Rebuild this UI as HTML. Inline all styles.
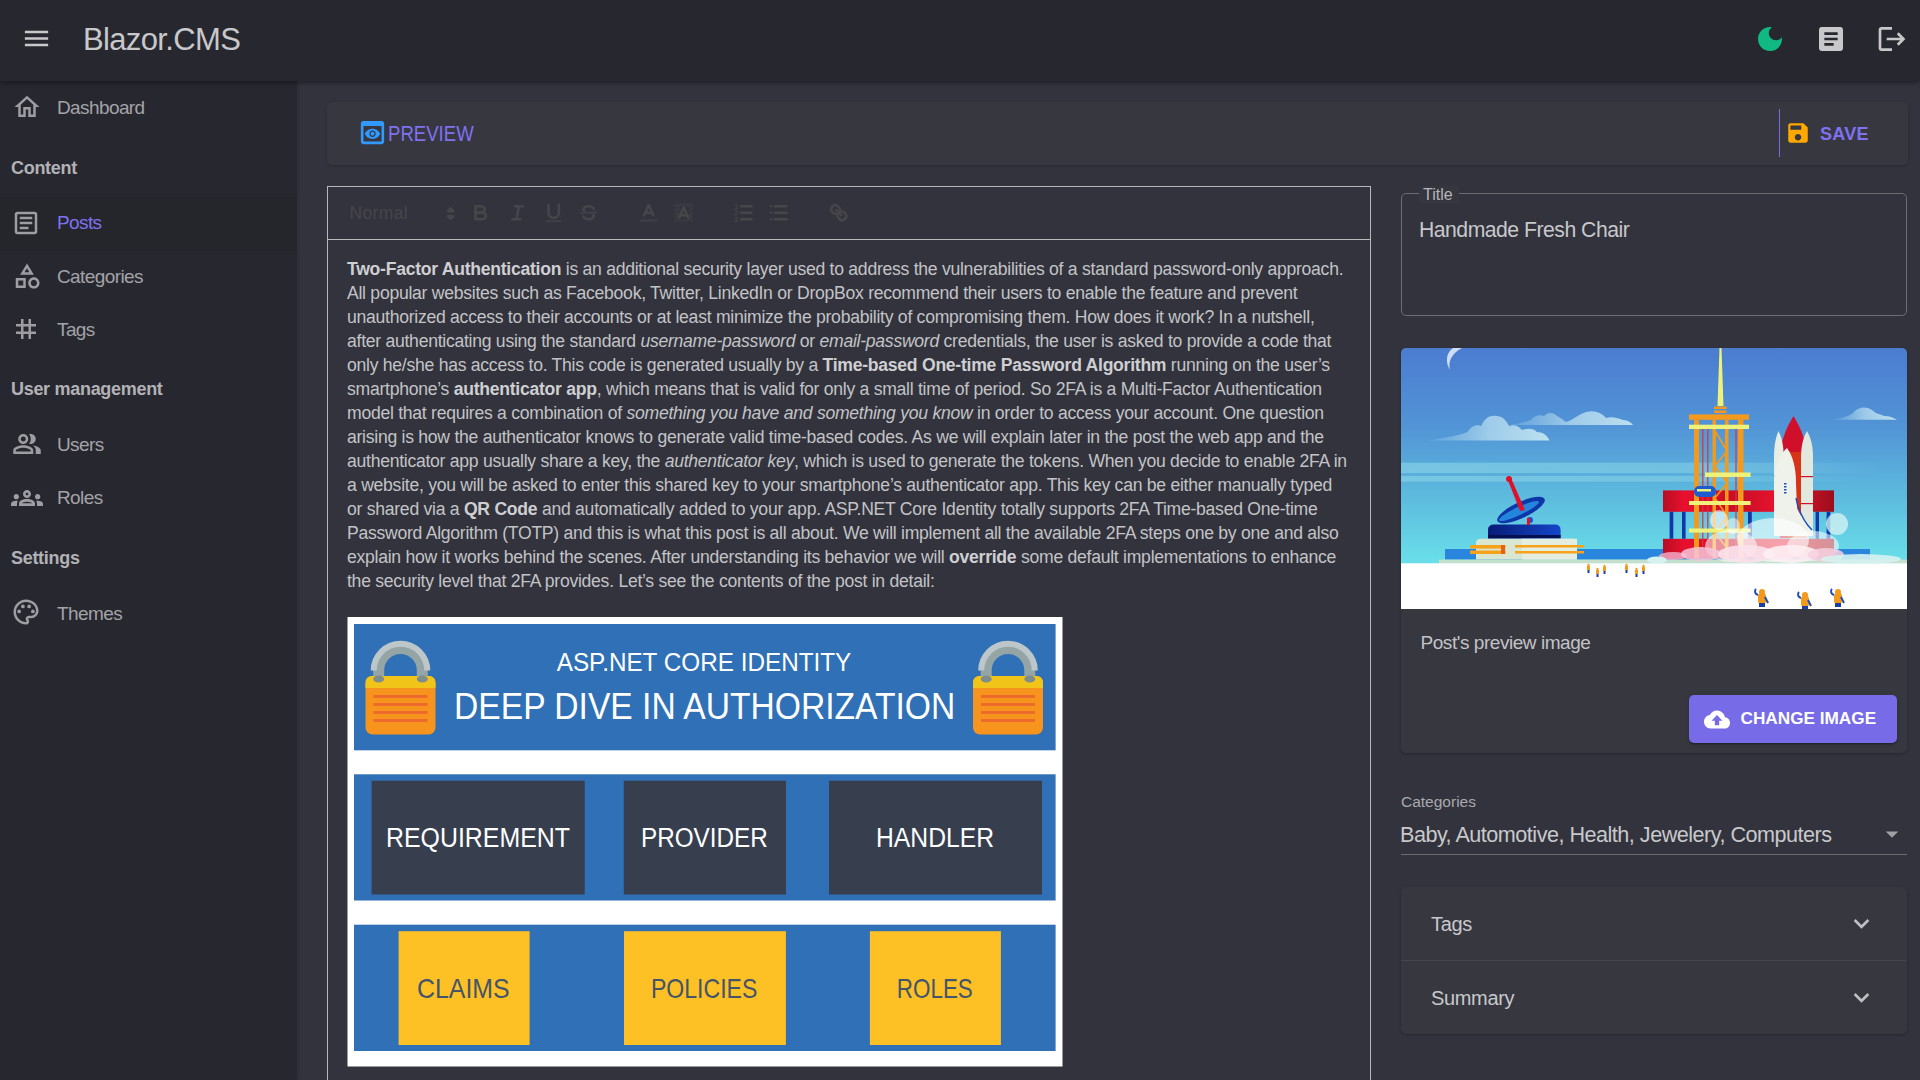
<!DOCTYPE html>
<html><head><meta charset="utf-8">
<style>
*{box-sizing:border-box;margin:0;padding:0}
html,body{width:1920px;height:1080px;overflow:hidden;background:#32333d;font-family:"Liberation Sans",sans-serif}
.abs{position:absolute}
svg{display:block}
#appbar{position:absolute;left:0;top:0;width:1920px;height:81px;background:#27272f;box-shadow:0 2px 4px rgba(0,0,0,.35);z-index:3}
#drawer{position:absolute;left:0;top:81px;width:297px;height:999px;background:#27272f;z-index:2;box-shadow:1px 0 3px rgba(0,0,0,.15)}
.t{position:absolute;white-space:pre;line-height:1}
.nav-ico{position:absolute;fill:#9d9da3}
.nav-txt{position:absolute;white-space:pre;line-height:1;font-size:19px;color:#a3a3a8;letter-spacing:-0.6px;margin-top:1px}
.grp{position:absolute;white-space:pre;line-height:1;font-size:18px;font-weight:700;color:#b2b2b6;letter-spacing:-0.3px}
#editor{position:absolute;left:327px;top:186px;width:1044px;height:900px;border:1px solid #cccccc}
#tb{position:absolute;left:0;top:0;width:1042px;height:54px;border-bottom:1px solid #cccccc}
.para{position:absolute;left:347px;top:256.5px;width:1010px;font-size:17.6px;letter-spacing:-0.27px;line-height:24.02px;color:#c3c3c6;white-space:nowrap}
.para b{font-weight:700;color:#cfcfd2}
</style></head><body>

<!-- APP BAR -->
<div id="appbar">
  <svg class="abs" style="left:21px;top:23px" width="31" height="31" viewBox="0 0 24 24"><path fill="#c8c8ca" d="M3 18h18v-2H3v2zm0-5h18v-2H3v2zm0-7v2h18V6H3z"/></svg>
  <div class="t" style="left:83px;top:24px;font-size:31px;color:#c8c8ca;letter-spacing:-0.65px">Blazor.CMS</div>
  <svg class="abs" style="left:1753.5px;top:23px" width="32" height="32" viewBox="0 0 24 24"><path fill="#10b981" d="M12 3c-4.97 0-9 4.030-9 9s4.03 9 9 9 9-4.03 9-9c0-.46-.04-.92-.1-1.36-.98 1.37-2.58 2.26-4.4 2.26-2.98 0-5.4-2.42-5.4-5.4 0-1.81.89-3.42 2.26-4.4-.44-.06-.9-.1-1.36-.1z"/></svg>
  <svg class="abs" style="left:1814.5px;top:23px" width="32" height="32" viewBox="0 0 24 24"><path fill="#c8c8ca" d="M19 3H5c-1.1 0-2 .9-2 2v14c0 1.1.9 2 2 2h14c1.1 0 2-.9 2-2V5c0-1.1-.9-2-2-2zm-5 14H7v-2h7v2zm3-4H7v-2h10v2zm0-4H7V7h10v2z"/></svg>
  <svg class="abs" style="left:1875.5px;top:23px" width="32" height="32" viewBox="0 0 24 24"><path fill="#c8c8ca" d="M17 7l-1.41 1.41L18.17 11H8v2h10.17l-2.58 2.58L17 17l5-5zM4 5h8V3H4c-1.1 0-2 .9-2 2v14c0 1.1.9 2 2 2h8v-2H4V5z"/></svg>
</div>

<!-- DRAWER -->
<div id="drawer"></div>
<div class="abs" style="z-index:4;left:0;top:0">
  <!-- active row -->
  <div class="abs" style="left:0;top:196.5px;width:297px;height:54.5px;background:#25262b"></div>
  <svg class="nav-ico" style="left:12px;top:92px" width="30" height="30" viewBox="0 0 24 24"><path d="M12 5.69l5 4.5V18h-2v-6H9v6H7v-7.81l5-4.5M12 3L2 12h3v8h6v-6h2v6h6v-8h3L12 3z"/></svg>
  <div class="nav-txt" style="left:57px;top:97px">Dashboard</div>
  <div class="grp" style="left:11px;top:159px">Content</div>
  <svg class="nav-ico" style="left:11px;top:208px" width="30" height="30" viewBox="0 0 24 24"><path d="M19 5v14H5V5h14m0-2H5c-1.1 0-2 .9-2 2v14c0 1.1.9 2 2 2h14c1.1 0 2-.9 2-2V5c0-1.1-.9-2-2-2zM14 17H7v-2h7v2zm3-4H7v-2h10v2zm0-4H7V7h10v2z"/></svg>
  <div class="nav-txt" style="left:57px;top:212px;color:#7f72f0">Posts</div>
  <svg class="nav-ico" style="left:12px;top:261px" width="30" height="30" viewBox="0 0 24 24"><path d="M12 2l-5.5 9h11L12 2zm0 3.84L13.93 9h-3.87L12 5.84zM17.5 13c-2.49 0-4.5 2.01-4.5 4.5s2.01 4.5 4.5 4.5 4.5-2.01 4.5-4.5-2.01-4.5-4.5-4.5zm0 7c-1.38 0-2.5-1.12-2.5-2.5s1.12-2.5 2.5-2.5 2.5 1.12 2.5 2.5-1.12 2.5-2.5 2.5zM3 21.5h8v-8H3v8zm2-6h4v4H5v-4z"/></svg>
  <div class="nav-txt" style="left:57px;top:266px">Categories</div>
  <svg class="nav-ico" style="left:11px;top:314px" width="30" height="30" viewBox="0 0 24 24"><path d="M20 10V8h-4V4h-2v4h-4V4H8v4H4v2h4v4H4v2h4v4h2v-4h4v4h2v-4h4v-2h-4v-4h4zm-6 4h-4v-4h4v4z"/></svg>
  <div class="nav-txt" style="left:57px;top:319px">Tags</div>
  <div class="grp" style="left:11px;top:380px">User management</div>
  <svg class="nav-ico" style="left:12px;top:429px" width="30" height="30" viewBox="0 0 24 24"><path d="M16.67 13.13C18.04 14.06 19 15.32 19 17v3h4v-3c0-2.18-3.57-3.47-6.33-3.87zM15 12c2.21 0 4-1.79 4-4s-1.79-4-4-4c-.47 0-.91.1-1.33.24C14.5 5.27 15 6.58 15 8s-.5 2.73-1.33 3.76c.42.14.86.24 1.33.24zM9 12c2.21 0 4-1.790 4-4s-1.79-4-4-4-4 1.79-4 4 1.79 4 4 4zm0-6c1.1 0 2 .9 2 2s-.9 2-2 2-2-.9-2-2 .9-2 2-2zM9 13c-2.67 0-8 1.34-8 4v3h16v-3c0-2.66-5.33-4-8-4zm6 5H3v-.99C3.2 16.29 6.3 15 9 15s5.8 1.29 6 2v1z"/></svg>
  <div class="nav-txt" style="left:57px;top:434px">Users</div>
  <svg class="nav-ico" style="left:11px;top:482px" width="32" height="32" viewBox="0 0 24 24"><path d="M4,13c1.1,0,2-0.9,2-2c0-1.1-0.9-2-2-2s-2,0.9-2,2C2,12.1,2.9,13,4,13z M5.13,14.1C4.76,14.04,4.39,14,4,14c-0.99,0-1.93,0.21-2.78,0.58C0.48,14.9,0,15.62,0,16.43V18l4.5,0v-1.61C4.5,15.56,4.73,14.78,5.13,14.1z M20,13c1.1,0,2-0.9,2-2c0-1.1-0.9-2-2-2s-2,0.9-2,2C18,12.1,18.9,13,20,13z M24,16.43c0-0.81-0.48-1.53-1.220-1.85C21.93,14.21,20.99,14,20,14c-0.39,0-0.76,0.04-1.13,0.1c0.4,0.68,0.63,1.46,0.63,2.29V18l4.5,0V16.43z M16.24,13.65c-1.17-0.52-2.61-0.9-4.24-0.9c-1.63,0-3.07,0.39-4.24,0.9C6.68,14.13,6,15.21,6,16.39V18h12v-1.61C18,15.21,17.32,14.13,16.24,13.65z M8.07,16c0.09-0.23,0.13-0.39,0.91-0.69c0.97-0.38,1.99-0.56,3.02-0.56s2.05,0.18,3.02,0.56c0.77,0.3,0.81,0.46,0.91,0.69H8.07z M12,8c0.55,0,1,0.45,1,1s-0.45,1-1,1s-1-0.45-1-1S11.45,8,12,8 M12,6c-1.66,0-3,1.34-3,3c0,1.66,1.34,3,3,3s3-1.34,3-3C15,7.34,13.66,6,12,6L12,6z"/></svg>
  <div class="nav-txt" style="left:57px;top:487px">Roles</div>
  <div class="grp" style="left:11px;top:549px">Settings</div>
  <svg class="nav-ico" style="left:11px;top:597px" width="30" height="30" viewBox="0 0 24 24"><path d="M12 22C6.49 22 2 17.51 2 12S6.49 2 12 2s10 4.04 10 9c0 3.31-2.690 6-6 6h-1.77c-.28 0-.5.22-.5.5 0 .12.05.23.13.33.41.47.64 1.06.64 1.67 0 1.38-1.12 2.5-2.5 2.5zm0-18c-4.41 0-8 3.59-8 8s3.59 8 8 8c.28 0 .5-.22.5-.5 0-.16-.08-.28-.14-.35-.41-.46-.63-1.05-.63-1.65 0-1.38 1.12-2.5 2.5-2.5H16c2.21 0 4-1.79 4-4 0-3.86-3.59-7-8-7z"/><circle cx="6.5" cy="11.5" r="1.5"/><circle cx="9.5" cy="7.5" r="1.5"/><circle cx="14.5" cy="7.5" r="1.5"/><circle cx="17.5" cy="11.5" r="1.5"/></svg>
  <div class="nav-txt" style="left:57px;top:603px">Themes</div>
</div>

<!-- TOOLBAR CARD -->
<div class="abs" style="left:327px;top:102px;width:1581px;height:63px;background:#373740;border-radius:5px;box-shadow:0 1px 3px rgba(0,0,0,.2)">
  <svg class="abs" style="left:30.2px;top:15px" width="31" height="31" viewBox="0 0 24 24"><path fill="#3299ff" d="M19 3H5c-1.11 0-2 .9-2 2v14c0 1.1.89 2 2 2h14c1.1 0 2-.9 2-2V5c0-1.1-.89-2-2-2zm0 16H5V7h14v12zm-5.5-6c0 .83-.67 1.5-1.5 1.5s-1.5-.67-1.5-1.5.67-1.5 1.5-1.5 1.5.67 1.5 1.5zM12 9c-2.73 0-5.06 1.66-6 4 .94 2.34 3.27 4 6 4s5.06-1.66 6-4c-.94-2.34-3.270-4-6-4zm0 6.5c-1.38 0-2.5-1.12-2.5-2.5s1.12-2.5 2.5-2.5 2.5 1.12 2.5 2.5-1.12 2.5-2.5 2.5z"/></svg>
  <div class="t" style="left:61px;top:20.5px;font-size:22px;color:#7f72f0;transform:scaleX(0.845);transform-origin:0 0">PREVIEW</div>
  <div class="abs" style="left:1452px;top:7px;width:1px;height:48px;background:#776be7"></div>
  <svg class="abs" style="left:1458px;top:18px" width="26" height="26" viewBox="0 0 24 24"><path fill="#ffa800" d="M17 3H5c-1.11 0-2 .9-2 2v14c0 1.1.89 2 2 2h14c1.1 0 2-.9 2-2V7l-4-4zm-5 16c-1.66 0-3-1.34-3-3s1.34-3 3-3 3 1.34 3 3-1.34 3-3 3zm3-10H5V5h10v4z"/></svg>
  <div class="t" style="left:1493px;top:23px;font-size:18px;font-weight:700;color:#7f72f0;letter-spacing:0.3px">SAVE</div>
</div>

<!-- EDITOR -->
<div class="abs" style="left:327px;top:186px;width:1044px;height:900px;border:1px solid #b8b8b8"></div>
<div class="abs" style="left:328px;top:239px;width:1042px;height:1px;background:#b8b8b8"></div>
<!-- quill toolbar -->
<div class="t" style="left:349.5px;top:204.5px;font-size:17.5px;color:#46464a;letter-spacing:0.35px">Normal</div>
<svg class="abs" style="left:439px;top:202px" width="23.4" height="23.4" viewBox="0 0 18 18" fill="#46464a" stroke="#46464a" stroke-width="2" stroke-linejoin="round"><polygon points="7 11 9 13 11 11 7 11"/><polygon points="7 7 9 5 11 7 7 7"/></svg>
<svg class="abs" style="left:469.3px;top:201.2px" width="23.4" height="23.4" viewBox="0 0 18 18" fill="none" stroke="#46464a" stroke-width="2" stroke-linecap="round" stroke-linejoin="round"><path d="M5,4H9.5A2.5,2.5,0,0,1,12,6.5v0A2.5,2.5,0,0,1,9.5,9H5A0,0,0,0,1,5,9V4A0,0,0,0,1,5,4Z"/><path d="M5,9h5.5A2.5,2.5,0,0,1,13,11.5v0A2.5,2.5,0,0,1,10.5,14H5a0,0,0,0,1,0,0V9A0,0,0,0,1,5,9Z"/></svg>
<svg class="abs" style="left:505.8px;top:201.2px" width="23.4" height="23.4" viewBox="0 0 18 18" fill="none" stroke="#46464a" stroke-width="2" stroke-linecap="round"><line x1="7" x2="13" y1="4" y2="4"/><line x1="5" x2="11" y1="14" y2="14"/><line x1="8" x2="10" y1="14" y2="4"/></svg>
<svg class="abs" style="left:542px;top:201.2px" width="23.4" height="23.4" viewBox="0 0 18 18" fill="none" stroke="#46464a" stroke-width="2" stroke-linecap="round"><path d="M5,3V9a4.012,4.012,0,0,0,4,4H9a4.012,4.012,0,0,0,4-4V3"/><rect fill="#46464a" stroke="none" height="1" rx="0.5" ry="0.5" width="12" x="3" y="15"/></svg>
<svg class="abs" style="left:577px;top:201.2px" width="23.4" height="23.4" viewBox="0 0 18 18" fill="#46464a"><line stroke="#46464a" stroke-width="1" x1="15.5" x2="2.5" y1="8.5" y2="9.5"/><path d="M9.007,8C6.542,7.791,6,7.519,6,6.5,6,5.792,7.283,5,9,5c1.571,0,2.765.679,2.969,1.309a1,1,0,0,0,1.9-.617C13.356,4.106,11.354,3,9,3,6.2,3,4,4.538,4,6.5a3.2,3.2,0,0,0,.5,1.843Z"/><path d="M8.984,10C11.457,10.208,12,10.479,12,11.5c0,.708-1.283,1.5-3,1.5-1.571,0-2.765-.679-2.969-1.309a1,1,0,1,0-1.9.617C4.644,13.894,6.646,15,9,15c2.8,0,5-1.538,5-3.5a3.2,3.2,0,0,0-.5-1.843Z"/></svg>
<svg class="abs" style="left:636.9px;top:201px" width="23.4" height="23.4" viewBox="0 0 18 18" fill="none" stroke="#46464a" stroke-width="2" stroke-linecap="round" stroke-linejoin="round"><line x1="3" x2="15" y1="15" y2="15" stroke-opacity=".6"/><polyline points="5.5 11 9 3 12.5 11"/><line x1="11.63" x2="6.38" y1="9" y2="9"/></svg>
<svg class="abs" style="left:672.3px;top:201px" width="23.4" height="23.4" viewBox="0 0 18 18" fill="none" stroke="#46464a" stroke-width="2" stroke-linecap="round" stroke-linejoin="round"><g fill="#46464a" stroke="none"><rect x="2" y="3" width="1" height="1"/><rect x="2" y="6" width="1" height="1"/><rect x="2" y="9" width="1" height="1"/><rect x="2" y="12" width="1" height="1"/><rect x="2" y="15" width="1" height="1"/><rect x="3" y="2" width="1" height="1"/><rect x="3" y="5" width="1" height="1"/><rect x="3" y="8" width="1" height="1"/><rect x="3" y="11" width="1" height="1"/><rect x="3" y="14" width="1" height="1"/><rect x="4" y="4" width="1" height="1"/><rect x="4" y="7" width="1" height="1"/><rect x="4" y="10" width="1" height="1"/><rect x="4" y="13" width="1" height="1"/><rect x="5" y="3" width="1" height="1"/><rect x="5" y="6" width="1" height="1"/><rect x="5" y="9" width="1" height="1"/><rect x="5" y="12" width="1" height="1"/><rect x="5" y="15" width="1" height="1"/><rect x="6" y="2" width="1" height="1"/><rect x="6" y="14" width="1" height="1"/><rect x="8" y="3" width="1" height="1"/><rect x="8" y="15" width="1" height="1"/><rect x="9" y="2" width="1" height="1"/><rect x="9" y="14" width="1" height="1"/><rect x="11" y="3" width="1" height="1"/><rect x="11" y="15" width="1" height="1"/><rect x="12" y="2" width="1" height="1"/><rect x="12" y="14" width="1" height="1"/><rect x="13" y="4" width="1" height="1"/><rect x="13" y="7" width="1" height="1"/><rect x="13" y="10" width="1" height="1"/><rect x="13" y="13" width="1" height="1"/><rect x="14" y="3" width="1" height="1"/><rect x="14" y="6" width="1" height="1"/><rect x="14" y="9" width="1" height="1"/><rect x="14" y="12" width="1" height="1"/><rect x="14" y="15" width="1" height="1"/><rect x="15" y="2" width="1" height="1"/><rect x="15" y="5" width="1" height="1"/><rect x="15" y="8" width="1" height="1"/><rect x="15" y="11" width="1" height="1"/><rect x="15" y="14" width="1" height="1"/></g><polyline points="5.5 13 9 5 12.5 13"/><line x1="11.63" x2="6.38" y1="11" y2="11"/></svg>
<svg class="abs" style="left:732.4px;top:201px" width="23.4" height="23.4" viewBox="0 0 18 18" fill="none" stroke="#46464a" stroke-width="2" stroke-linecap="round"><line x1="7" x2="15" y1="4" y2="4"/><line x1="7" x2="15" y1="9" y2="9"/><line x1="7" x2="15" y1="14" y2="14"/><g fill="#46464a" stroke="none" font-family="Liberation Sans" font-size="5.2" font-weight="700"><text x="1.8" y="6">1</text><text x="1.8" y="11">2</text><text x="1.8" y="16">3</text></g></svg>
<svg class="abs" style="left:767.3px;top:201px" width="23.4" height="23.4" viewBox="0 0 18 18" fill="none" stroke="#46464a" stroke-width="2" stroke-linecap="round"><line x1="6" x2="15" y1="4" y2="4"/><line x1="6" x2="15" y1="9" y2="9"/><line x1="6" x2="15" y1="14" y2="14"/><line x1="3" x2="3" y1="4" y2="4"/><line x1="3" x2="3" y1="9" y2="9"/><line x1="3" x2="3" y1="14" y2="14"/></svg>
<svg class="abs" style="left:827.3px;top:201px" width="23.4" height="23.4" viewBox="0 0 18 18" fill="none" stroke="#46464a" stroke-width="2" stroke-linecap="round"><line x1="7" x2="11" y1="7" y2="11"/><path d="M8.9,4.577a3.476,3.476,0,0,1,.36,4.679A3.476,3.476,0,0,1,4.577,8.9C3.185,7.5,2.035,6.4,4.217,4.217S7.5,3.185,8.9,4.577Z"/><path d="M13.423,9.1a3.476,3.476,0,0,0-4.679-.36,3.476,3.476,0,0,0,.36,4.679c1.392,1.392,2.5,2.542,4.679.36S14.815,10.5,13.423,9.1Z"/></svg>

<!-- paragraph -->
<div class="para">
<div><b>Two-Factor Authentication</b> is an additional security layer used to address the vulnerabilities of a standard password-only approach.</div>
<div>All popular websites such as Facebook, Twitter, LinkedIn or DropBox recommend their users to enable the feature and prevent</div>
<div>unauthorized access to their accounts or at least minimize the probability of compromising them. How does it work? In a nutshell,</div>
<div>after authenticating using the standard <i>username-password</i> or <i>email-password</i> credentials, the user is asked to provide a code that</div>
<div>only he/she has access to. This code is generated usually by a <b>Time-based One-time Password Algorithm</b> running on the user’s</div>
<div>smartphone’s <b>authenticator app</b>, which means that is valid for only a small time of period. So 2FA is a Multi-Factor Authentication</div>
<div>model that requires a combination of <i>something you have and something you know</i> in order to access your account. One question</div>
<div>arising is how the authenticator knows to generate valid time-based codes. As we will explain later in the post the web app and the</div>
<div>authenticator app usually share a key, the <i>authenticator key</i>, which is used to generate the tokens. When you decide to enable 2FA in</div>
<div>a website, you will be asked to enter this shared key to your smartphone’s authenticator app. This key can be either manually typed</div>
<div>or shared via a <b>QR Code</b> and automatically added to your app. ASP.NET Core Identity totally supports 2FA Time-based One-time</div>
<div>Password Algorithm (TOTP) and this is what this post is all about. We will implement all the available 2FA steps one by one and also</div>
<div>explain how it works behind the scenes. After understanding its behavior we will <b>override</b> some default implementations to enhance</div>
<div>the security level that 2FA provides. Let’s see the contents of the post in detail:</div>
</div>

<!-- article image -->
<svg class="abs" style="left:347px;top:617px" width="716" height="450" viewBox="347 617 716 450">
  <defs>
    <g id="lock">
      <path d="M13.2 36 V27.3 A21.8 21.8 0 0 1 56.8 27.3 V36" fill="none" stroke="#95a5a6" stroke-width="11"/>
      <path d="M8.2 26 A26.8 26.8 0 0 1 61.8 26" fill="none" stroke="#bdc6c8" stroke-width="6" transform="translate(0,1.5)"/>
      <rect x="0" y="33" width="70" height="58.6" rx="7" fill="#f7941d"/>
      <rect x="0" y="33" width="70" height="12" rx="6" fill="#f0c419"/>
      <rect x="0" y="40" width="70" height="5" fill="#f0c419"/>
      <g fill="#ee6a2c"><rect x="8" y="52" width="54" height="3"/><rect x="8" y="60" width="54" height="3"/><rect x="8" y="68" width="54" height="3"/><rect x="8" y="76" width="54" height="3"/></g>
      <ellipse cx="13.2" cy="36" rx="5.5" ry="3.5" fill="#7f8c8d"/><ellipse cx="56.8" cy="36" rx="5.5" ry="3.5" fill="#7f8c8d"/>
    </g>
  </defs>
  <rect x="347.5" y="617" width="715" height="449.5" fill="#ffffff"/>
  <rect x="354" y="624" width="701.6" height="126.3" fill="#2f70b6"/>
  <rect x="354" y="774.3" width="701.6" height="126.2" fill="#2f70b6"/>
  <rect x="354" y="924.7" width="701.6" height="126.3" fill="#2f70b6"/>
  <use href="#lock" x="365.5" y="643"/>
  <use href="#lock" x="973" y="643"/>
  <g fill="#ffffff" font-family="Liberation Sans" >
    <text x="556.7" y="671.1" font-size="26.5" textLength="294.6" lengthAdjust="spacingAndGlyphs">ASP.NET CORE IDENTITY</text>
    <text x="454" y="719" font-size="36" textLength="501.3" lengthAdjust="spacingAndGlyphs">DEEP DIVE IN AUTHORIZATION</text>
  </g>
  <g fill="#373f4f">
    <rect x="371.6" y="780.7" width="213.1" height="113.8"/>
    <rect x="623.8" y="780.7" width="162.2" height="113.8"/>
    <rect x="829" y="780.7" width="213" height="113.8"/>
  </g>
  <g fill="#ffffff" font-family="Liberation Sans" font-size="27">
    <text x="386" y="847.4" textLength="184" lengthAdjust="spacingAndGlyphs">REQUIREMENT</text>
    <text x="641" y="847.4" textLength="126.8" lengthAdjust="spacingAndGlyphs">PROVIDER</text>
    <text x="876" y="847.4" textLength="118" lengthAdjust="spacingAndGlyphs">HANDLER</text>
  </g>
  <g fill="#fec125">
    <rect x="398.6" y="931.2" width="131" height="113.8"/>
    <rect x="624" y="931.2" width="161.9" height="113.8"/>
    <rect x="869.9" y="931.2" width="131" height="113.8"/>
  </g>
  <g fill="#44546a" font-family="Liberation Sans" font-size="28">
    <text x="417" y="997.9" textLength="92.6" lengthAdjust="spacingAndGlyphs">CLAIMS</text>
    <text x="651" y="997.9" textLength="106.3" lengthAdjust="spacingAndGlyphs">POLICIES</text>
    <text x="896.8" y="997.9" textLength="76" lengthAdjust="spacingAndGlyphs">ROLES</text>
  </g>
</svg>

<!-- RIGHT PANEL -->
<div class="abs" style="left:1401px;top:193px;width:506px;height:123px;border:1px solid #6d6d74;border-radius:5px"></div>
<div class="abs" style="left:1419px;top:186px;width:40px;height:17px;background:#35363f"></div>
<div class="t" style="left:1423px;top:187px;font-size:16px;color:#b5b5b9">Title</div>
<div class="t" style="left:1419px;top:219px;font-size:21.2px;letter-spacing:-0.5px;color:#c8c8cb">Handmade Fresh Chair</div>

<div class="abs" style="left:1401px;top:348px;width:506px;height:405px;background:#373740;border-radius:5px;box-shadow:0 1px 3px rgba(0,0,0,.25);overflow:hidden">
  <svg class="abs" style="left:0;top:0" width="506" height="261" viewBox="0 0 506 261">
    <defs>
      <linearGradient id="sky" x1="0" y1="0" x2="0" y2="1">
        <stop offset="0" stop-color="#4b7cd0"/>
        <stop offset="0.3" stop-color="#5294d6"/>
        <stop offset="0.55" stop-color="#5cb8dd"/>
        <stop offset="0.8" stop-color="#68dce8"/>
        <stop offset="1" stop-color="#78f0f0"/>
      </linearGradient>
      <linearGradient id="red" x1="0" y1="0" x2="1" y2="0">
        <stop offset="0" stop-color="#b80c22"/><stop offset=".12" stop-color="#e8102e"/><stop offset=".45" stop-color="#c80e26"/><stop offset=".7" stop-color="#ee1430"/><stop offset="1" stop-color="#9a0e1c"/>
      </linearGradient>
      <linearGradient id="bld" x1="0" y1="0" x2="1" y2="0">
        <stop offset="0" stop-color="#081c78"/><stop offset="1" stop-color="#1446c8"/>
      </linearGradient>
      <linearGradient id="cloud" x1="0" y1="0" x2="1" y2="0">
        <stop offset="0" stop-color="#9fd0ea" stop-opacity=".2"/><stop offset=".5" stop-color="#b8def0" stop-opacity=".75"/><stop offset="1" stop-color="#c8e8f2" stop-opacity=".9"/>
      </linearGradient>
      <g id="fig"><path d="M3 6 C0 5 -1 2 1 0" stroke="#1a4cc0" stroke-width="2" fill="none"/><rect x="3" y="4" width="8" height="11" rx="3" fill="#f39a1e"/><circle cx="7" cy="3" r="3" fill="#f39a1e"/><path d="M10 8 L13 14" stroke="#1a4cc0" stroke-width="2"/><rect x="4" y="14" width="6" height="4" fill="#1a3fa0"/></g>
      <g id="sfig"><rect x="0" y="2" width="3" height="4" fill="#f39a1e"/><circle cx="1.5" cy="1" r="1.2" fill="#f39a1e"/><rect x="0.5" y="6" width="2" height="3" fill="#1a3fa0"/></g>
    </defs>
    <rect x="0" y="0" width="506" height="261" fill="url(#sky)"/>
    <!-- moon -->
    <path d="M61 0 C50 6 47 14 49 22 C44 14 45 5 52 0 Z" fill="#e4eefc" opacity=".85"/>
    <!-- streaks -->
    <linearGradient id="streak" x1="0" y1="0" x2="1" y2="0"><stop offset="0" stop-color="#8cd6e8" stop-opacity=".6"/><stop offset=".6" stop-color="#8cd6e8" stop-opacity=".5"/><stop offset="1" stop-color="#8cd6e8" stop-opacity="0"/></linearGradient>
    <rect x="0" y="114.7" width="480" height="10.3" fill="url(#streak)"/>
    <rect x="0" y="128" width="460" height="5.6" fill="url(#streak)"/>
    <!-- clouds -->
    <path d="M27 92.6 C50 90 65 88 80 84 C84 78 92 76 98 78 C102 70 110 67 118 68 C126 68 131 72 135 78 C142 76 148 78 152 82 C160 80 168 80 172 84 C180 84 186 87 189 92.6 Z" transform="translate(27,0) scale(0.75,1) translate(-27,0)" fill="url(#cloud)"/>
    <path d="M107 77 C118 76 124 74 130 72 C133 68 138 66 143 68 C147 64 152 64 156 68 C160 70 162 72 165 74 C172 72 178 66 185 64 C193 62 200 64 205 70 C210 68 218 70 222 72 C226 72 230 74 232 77 Z" fill="url(#cloud)"/>
    <path d="M436 71.8 C445 70 452 68 456 64 C460 59 468 58 474 62 C478 66 482 66 486 68 C492 68 496 70 499 71.8 Z" transform="translate(-3,0)" fill="url(#cloud)"/>
    <!-- sea -->
    <rect x="44" y="201" width="425" height="10.6" fill="#2a86dc"/>
    <!-- ground strip -->
    <rect x="38" y="211.6" width="468" height="4" fill="#c4dfcb"/>
    <rect x="0" y="215.3" width="506" height="46" fill="#ffffff"/>
    <!-- satellite building -->
    <path d="M87 190.8 V182 Q87 176.5 93 176.5 H154 Q159.6 176.5 159.6 182 V190.8 Z" fill="url(#bld)"/>
    <rect x="87" y="187" width="72.6" height="3" fill="#061050"/>
    <path d="M75 211.6 V195 Q75 190.8 80 190.8 H172 Q176 190.8 176 195 V211.6 Z" fill="#d9e6d2"/>
    <rect x="121" y="190.8" width="55" height="20.8" fill="#e4eee0"/>
    <g fill="#f6a21a"><rect x="69" y="197" width="35.5" height="3.6"/><rect x="69" y="202.5" width="35.5" height="3.5"/><rect x="114" y="197" width="69" height="2.5"/><rect x="114" y="203" width="69" height="2.5"/></g>
    <rect x="100" y="197" width="4" height="9" fill="#e86010"/>
    <!-- dish -->
    <ellipse cx="120" cy="162" rx="26" ry="8" transform="rotate(-25 120 162)" fill="#0d36a8"/>
    <ellipse cx="118" cy="163" rx="22" ry="4" transform="rotate(-25 118 163)" fill="#2a9ae8" opacity=".8"/>
    <path d="M106.5 131 L110 130 L124 162 L119 163 Z" fill="#e0102a"/>
    <circle cx="108" cy="131" r="3" fill="#e0102a"/>
    <circle cx="129" cy="172" r="3" fill="#1a50c8"/>
    <rect x="126" y="170" width="3" height="7" fill="#e0102a"/>
    <!-- small people -->
    <use href="#sfig" x="186" y="216"/><use href="#sfig" x="195" y="220"/><use href="#sfig" x="202" y="217"/>
    <use href="#sfig" x="224" y="216"/><use href="#sfig" x="234" y="220"/><use href="#sfig" x="241" y="217"/>
    <!-- launch structure -->
    <rect x="262" y="142.4" width="171" height="21.4" fill="url(#red)"/>
    <rect x="262" y="190.8" width="171" height="19.6" fill="url(#red)"/>
    <g fill="#1238a8"><rect x="268.6" y="163.8" width="3.7" height="27"/><rect x="281" y="163.8" width="3.6" height="27"/><rect x="347" y="163.8" width="3.8" height="27"/><rect x="414.6" y="163.8" width="3.4" height="27"/><rect x="425.6" y="163.8" width="3.7" height="27"/></g>
    <!-- tower -->
    <g fill="#f39a1e">
      <rect x="288" y="66.4" width="60" height="5.4"/>
      <rect x="293" y="71.8" width="5" height="138.6"/><rect x="311.5" y="71.8" width="3.5" height="138.6"/>
      <rect x="324" y="71.8" width="3.5" height="138.6"/><rect x="337" y="71.8" width="5.5" height="138.6"/>
    </g>
    <g fill="#d8343a"><rect x="301.2" y="81" width="1.2" height="129"/><rect x="306.2" y="81" width="1.2" height="129"/><rect x="334.4" y="81" width="1.2" height="129"/></g>
    <path d="M314 83 L326 103 L314 118 L326 135 L314 150 L326 168 L314 185 L326 200" fill="none" stroke="#f39a1e" stroke-width="1.6"/>
    <g fill="#eef27a">
      <rect x="288" y="76.7" width="60" height="4.3"/>
      <rect x="304" y="124.5" width="45.6" height="4.5"/>
      <rect x="288" y="153" width="61.6" height="4"/>
      <rect x="288" y="180.5" width="61.6" height="4.1"/>
      <path d="M318.5 0 L320.5 0 L322.5 58 L316.5 58 Z"/>
      <rect x="313" y="58.5" width="12.5" height="2.5" fill="#f39a1e"/><rect x="313" y="62.5" width="12.5" height="2.5" fill="#f39a1e"/>
    </g>
    <rect x="293" y="138" width="22" height="11" rx="5" fill="#1e5ad0"/>
    <rect x="296" y="141" width="14" height="2.5" fill="#e8f07a"/>
    <!-- shuttle -->
    <path d="M392.5 68 C400 80 406 95 406 110 L406 190 L379 190 L379 110 C379 95 385 80 392.5 68 Z" fill="#d0102a"/>
    <rect x="386" y="104" width="20" height="86" fill="#d83a14" opacity=".85"/>
    <path d="M377.5 83 C381 90 382.7 98 382.7 110 L382.7 185 L373 185 L373 110 C373 98 374.5 90 377.5 83 Z" fill="#e8eee4"/>
    <path d="M406 83 C410 90 412 98 412 110 L412 185 L400 185 L400 110 C400 98 402 90 406 83 Z" fill="#e2e8de"/>
    <rect x="373" y="128" width="10" height="1.2" fill="#d0102a"/><rect x="400" y="128" width="12" height="1.2" fill="#d0102a"/>
    <rect x="400" y="155" width="12" height="1.2" fill="#d0102a"/>
    <path d="M386 100 C392 108 395 120 395 135 L396 160 C400 170 408 178 412 183 L412 188 L373 188 L373 130 C375 115 380 105 386 100 Z" fill="#eef2ea"/>
    <path d="M395 150 C398 165 404 175 411 182" fill="none" stroke="#1a4cc0" stroke-width="1.4"/>
    <g fill="#2050c0"><rect x="383" y="135" width="2.5" height="1.5"/><rect x="383" y="138" width="2.5" height="1.5"/><rect x="383" y="141" width="2.5" height="1.5"/><rect x="383" y="144" width="2.5" height="1.5"/></g>
    <!-- smoke -->
    <g>
      <ellipse cx="330" cy="198" rx="26" ry="16" fill="#ffffff" opacity=".55"/>
      <ellipse cx="372" cy="192" rx="36" ry="22" fill="#ffffff" opacity=".6"/>
      <ellipse cx="412" cy="198" rx="26" ry="15" fill="#ffffff" opacity=".55"/>
      <ellipse cx="318" cy="172" rx="9" ry="10" fill="#ffffff" opacity=".6"/>
      <ellipse cx="332" cy="178" rx="7" ry="8" fill="#ffffff" opacity=".5"/>
      <ellipse cx="436" cy="176" rx="11" ry="11" fill="#d8f4f4" opacity=".75"/>
      <ellipse cx="272" cy="208" rx="14" ry="4" fill="#f2a8c4" opacity=".85"/>
      <ellipse cx="300" cy="206" rx="20" ry="7" fill="#f6c6da" opacity=".85"/>
      <ellipse cx="345" cy="206" rx="28" ry="9" fill="#fbe2ec" opacity=".9"/>
      <ellipse cx="390" cy="206" rx="28" ry="9" fill="#fdf0f4" opacity=".9"/>
      <ellipse cx="425" cy="207" rx="18" ry="7" fill="#f6d0e0" opacity=".85"/>
      <ellipse cx="460" cy="211" rx="40" ry="5" fill="#d6f2f0" opacity=".9"/>
      <ellipse cx="256" cy="212" rx="10" ry="3.5" fill="#d6f2f0"/>
    </g>
    <!-- big people -->
    <use href="#fig" x="354" y="241"/><use href="#fig" x="397" y="244"/><use href="#fig" x="430" y="241"/>
  </svg>
  <div class="t" style="left:19.5px;top:284.5px;font-size:19px;color:#c3c3c6;letter-spacing:-0.45px">Post's preview image</div>
  <div class="abs" style="left:288px;top:347px;width:208px;height:47.5px;background:#776be7;border-radius:5px;box-shadow:0 3px 1px -2px rgba(0,0,0,.2),0 2px 2px 0 rgba(0,0,0,.14),0 1px 5px 0 rgba(0,0,0,.12)">
    <svg class="abs" style="left:15px;top:10.7px" width="26" height="27" viewBox="0 0 24 24" preserveAspectRatio="none"><path fill="#ffffff" d="M19.35 10.04C18.670 6.59 15.64 4 12 4 9.11 4 6.6 5.64 5.35 8.04 2.34 8.36 0 10.91 0 14c0 3.31 2.69 6 6 6h13c2.76 0 5-2.24 5-5 0-2.64-2.05-4.78-4.65-4.96zM14 13v4h-4v-4H7l5-5 5 5h-3z"/></svg>
    <div class="t" style="left:51.5px;top:14.8px;font-size:17.2px;font-weight:700;color:#ffffff;letter-spacing:0px">CHANGE IMAGE</div>
  </div>
</div>

<div class="t" style="left:1401px;top:794px;font-size:15.5px;color:#a9a9ae">Categories</div>
<div class="t" style="left:1400px;top:823.5px;font-size:21.6px;letter-spacing:-0.5px;color:#c8c8cb">Baby, Automotive, Health, Jewelery, Computers</div>
<svg class="abs" style="left:1876.5px;top:818.5px" width="30" height="30" viewBox="0 0 24 24"><path fill="#a0a0a5" d="M7 10l5 5 5-5z"/></svg>
<div class="abs" style="left:1401px;top:853.5px;width:506px;height:1px;background:#6c6c72"></div>

<div class="abs" style="left:1401px;top:887px;width:506px;height:147px;background:#373740;border-radius:5px;box-shadow:0 1px 3px rgba(0,0,0,.25)">
  <div class="abs" style="left:0;top:73px;width:506px;height:1px;background:#45454d"></div>
  <div class="t" style="left:30px;top:26.5px;font-size:20px;letter-spacing:-0.35px;color:#c8c8cb">Tags</div>
  <div class="t" style="left:30px;top:100.5px;font-size:20px;letter-spacing:-0.35px;color:#c8c8cb">Summary</div>
  <svg class="abs" style="left:444.5px;top:21px" width="31" height="31" viewBox="0 0 24 24"><path fill="#c0c0c4" d="M16.59 8.59L12 13.17 7.41 8.59 6 10l6 6 6-6z"/></svg>
  <svg class="abs" style="left:444.5px;top:95px" width="31" height="31" viewBox="0 0 24 24"><path fill="#c0c0c4" d="M16.59 8.59L12 13.17 7.41 8.59 6 10l6 6 6-6z"/></svg>
</div>

</body></html>
